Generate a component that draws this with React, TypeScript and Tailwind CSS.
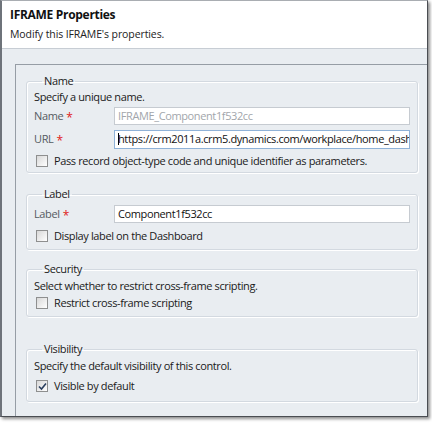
import React from "react";

const font = { fontFamily: '"Open Sans", "Noto Sans", "Liberation Sans", sans-serif' };

function Checkbox({ checked }: { checked?: boolean }) {
  return (
    <span className="w-[12px] h-[12px] border border-[#8e8f8f] bg-gradient-to-br from-[#d8d8d8] to-white flex items-center justify-center shrink-0">
      {checked && (
        <svg width="9" height="9" viewBox="0 0 9 9">
          <path d="M1 4.5 L3.5 7 L8 1.5" fill="none" stroke="#2a3f5f" strokeWidth="1.6" />
        </svg>
      )}
    </span>
  );
}

function Box({ title, children, className }: { title: string; children: React.ReactNode; className?: string }) {
  return (
    <fieldset
      className={
        "border border-[#d3d9e0] rounded-[3px] shadow-[inset_1px_1px_0_#ffffff,1px_1px_0_#ffffff] pl-[7px] pr-[6px] " +
        (className || "")
      }
    >
      <legend className="ml-[8px] px-[2px] text-[11px] leading-[16px] text-[#1a1a1a]">{title}</legend>
      {children}
    </fieldset>
  );
}

function Req() {
  return <span className="text-[#e0201a] ml-[3px] text-[12px] leading-[10px] relative top-[2px]">*</span>;
}

export default function App() {
  return (
    <div className="w-[432px] h-[424px] bg-white overflow-hidden text-[#1a1a1a]" style={font}>
      <div className="w-[428px] h-[417px] flex flex-col border-l-2 border-r border-b border-t border-l-[#6e737a] border-r-[#4a4d52] border-b-[#4a4d52] border-t-[#a9adb2] shadow-[2px_2px_3px_rgba(0,0,0,0.45)] bg-[#e9edf1]">
        <div className="h-[48px] bg-white border-b border-[#c7cdd4] pl-[8px] pt-[5px] shrink-0">
          <div className="text-[12px] leading-[18px] font-bold tracking-[-0.3px] text-[#111]">IFRAME Properties</div>
          <div className="text-[10.5px] leading-[16px] mt-[2px] tracking-[-0.1px] text-[#222]">Modify this IFRAME's properties.</div>
        </div>
        <div className="flex-1 pl-[13px] pt-[15px] flex min-h-0">
          <div className="flex-1 border-t border-l border-[#969da5] bg-[#e9edf1] pl-[10px] pr-[9px] pt-[8px] flex flex-col text-[11px] tracking-[-0.38px]">
            <Box title="Name">
              <div className="leading-[16px]">Specify a unique name.</div>
              <div className="h-[22px] flex items-center">
                <div className="w-[80px] text-[#555b61] flex items-center">
                  Name<Req />
                </div>
                <div className="w-[296px] h-[18px] border border-[#c6cbd1] bg-white pl-[3px] flex items-center text-[#a2a6ab] whitespace-nowrap overflow-hidden">
                  IFRAME_Component1f532cc
                </div>
              </div>
              <div className="h-[22px] mt-[1px] flex items-center">
                <div className="w-[80px] text-[#555b61] flex items-center">
                  URL<Req />
                </div>
                <div className="w-[296px] h-[19px] border border-[#8fb2d8] bg-white pl-[3px] flex items-center whitespace-nowrap overflow-hidden text-[#111]">
                  <span className="w-[1px] h-[12px] bg-black -mr-[1px] shrink-0" />
                  https://crm2011a.crm5.dynamics.com/workplace/home_dashboards.aspx
                </div>
              </div>
              <div className="h-[22px] flex items-center gap-[6px] pl-[2px]">
                <Checkbox />
                <span className="whitespace-nowrap">Pass record object-type code and unique identifier as parameters.</span>
              </div>
            </Box>
            <Box title="Label" className="mt-[13px] pb-[2px]">
              <div className="h-[22px] mt-[1px] flex items-center">
                <div className="w-[80px] text-[#555b61] flex items-center">
                  Label<Req />
                </div>
                <div className="w-[296px] h-[18px] border border-[#c6cbd1] bg-white pl-[3px] flex items-center text-[#111] whitespace-nowrap overflow-hidden">
                  Component1f532cc
                </div>
              </div>
              <div className="h-[22px] flex items-center gap-[6px] pl-[2px]">
                <Checkbox />
                <span>Display label on the Dashboard</span>
              </div>
            </Box>
            <Box title="Security" className="mt-[11px] pb-[4px]">
              <div className="leading-[16px] mt-[1px]">Select whether to restrict cross-frame scripting.</div>
              <div className="h-[18px] flex items-center gap-[6px] pl-[2px]">
                <Checkbox />
                <span>Restrict cross-frame scripting</span>
              </div>
            </Box>
            <Box title="Visibility" className="mt-[24px] pb-[5px]">
              <div className="leading-[16px] mt-[1px]">Specify the default visibility of this control.</div>
              <div className="h-[20px] mt-[2px] flex items-center gap-[6px] pl-[2px]">
                <Checkbox checked />
                <span>Visible by default</span>
              </div>
            </Box>
          </div>
        </div>
      </div>
    </div>
  );
}
